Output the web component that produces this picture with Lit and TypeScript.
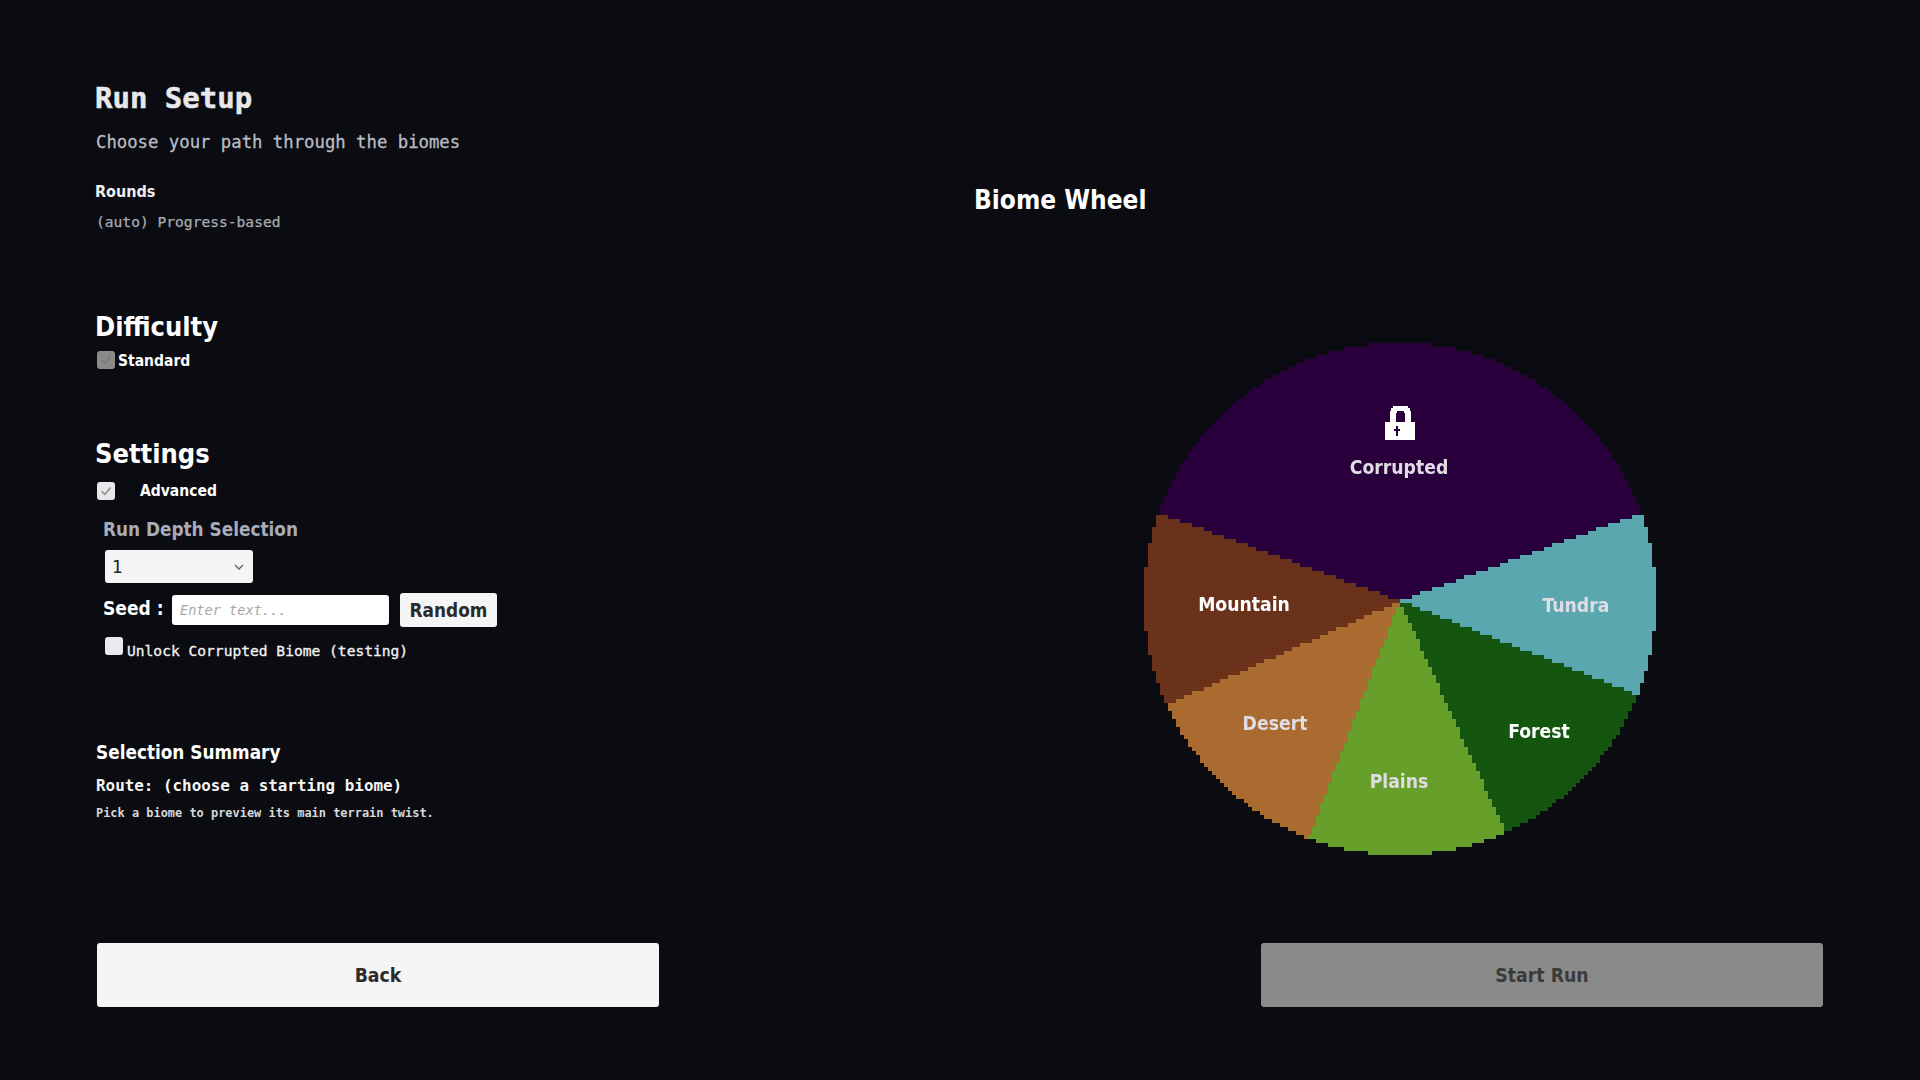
import { LitElement, html, css, svg } from "lit";
import { customElement } from "lit/decorators.js";

const SIZE = 128;
const SLICES = [
  { from: -160, to: -20, color: "#29003c" },
  { from: -20, to: 21.5, color: "#5aa7b0" },
  { from: 21.5, to: 65.5, color: "#14560f" },
  { from: 65.5, to: 111, color: "#66a02b" },
  { from: 111, to: 156, color: "#a96b2f" },
  { from: 156, to: 200, color: "#6b321b" },
];
const LABELS = [
  { text: "Corrupted", x: 255, y: 124, dim: true },
  { text: "Mountain", x: 100, y: 261, dim: false },
  { text: "Tundra", x: 432, y: 262, dim: true },
  { text: "Desert", x: 131, y: 380, dim: true },
  { text: "Forest", x: 395, y: 388, dim: false },
  { text: "Plains", x: 255, y: 438, dim: true },
];

@customElement("app-root")
export class AppRoot extends LitElement {
  static styles = css`
    :host { display: block; width: 1920px; height: 1080px; background: #0a0c12; color: #fff; overflow: hidden; font-family: "DejaVu Sans", sans-serif; font-stretch: condensed; }
    .page { display: flex; flex-direction: column; height: 1080px; }
    .main { display: flex; flex: 1; min-height: 0; }
    .left { width: 879px; padding: 78px 0 0 96px; display: flex; flex-direction: column; align-items: flex-start; }
    .right { flex: 1; padding-top: 180px; }
    .mono { font-family: "DejaVu Sans Mono", monospace; font-stretch: normal; }
    .title { font: 700 29px/40px "DejaVu Sans Mono", monospace; color: #e8e8ea; margin-left: -1px; -webkit-text-stroke: 0.5px #e8e8ea; }
    .subtitle { margin-top: 12px; font-size: 17.3px; line-height: 24px; color: #b9bbc2; -webkit-text-stroke: 0.3px #b9bbc2; }
    .rounds { margin-top: 28px; margin-left: -1px; font-size: 16px; font-weight: 700; line-height: 20px; color: #f0f0f0; }
    .auto { margin-top: 10px; font-size: 14.6px; line-height: 20px; color: #a9abb2; -webkit-text-stroke: 0.25px #a9abb2; }
    .h2 { margin-left: -1px; font-size: 27px; font-weight: 700; line-height: 36px; color: #fff; }
    .difficulty { margin-top: 77px; }
    .settings { margin-top: 66px; }
    .row { display: flex; align-items: center; }
    .std { margin-top: 5px; height: 20px; padding-left: 1px; font-size: 15.5px; font-weight: 700; }
    .std .box { margin-right: 3px; }
    .std span.t { margin-top: 2px; }
    .adv { margin-top: 9px; height: 20px; padding-left: 1px; font-size: 15.5px; font-weight: 700; }
    .adv .box { margin-right: 25px; }
    .box { width: 18px; height: 18px; border-radius: 3px; display: flex; align-items: center; justify-content: center; flex: none; }
    .box svg { width: 14px; height: 14px; }
    .gray { background: #8a8a8a; }
    .light { background: #e8e8ea; }
    .pale { background: #e9eaf0; }
    .depth { margin: 17px 0 0 7px; font-size: 18.8px; font-weight: 700; line-height: 24px; color: #a9abb7; }
    .selwrap { position: relative; margin: 8px 0 0 9px; width: 148px; height: 33px; }
    select { appearance: none; width: 100%; height: 100%; border: 0; border-radius: 3px; background: #f5f5f5; color: #222; font: 400 17px "DejaVu Sans", sans-serif; padding: 0 0 0 7px; }
    .chev { position: absolute; right: 8px; top: 12px; width: 12px; height: 10px; pointer-events: none; }
    .seed { margin: 10px 0 0 7px; height: 34px; }
    .seedlabel { width: 69px; margin-bottom: 4px; font-size: 19px; font-weight: 700; }
    input.text { width: 217px; height: 30px; box-sizing: border-box; border: 0; border-radius: 3px; background: #fff; padding: 0 8px; font: italic 13.6px "DejaVu Sans Mono", monospace; color: #222; outline: none; }
    input.text::placeholder { color: #a8a8a8; opacity: 1; }
    .random { margin-left: 11px; width: 97px; height: 34px; border: 0; border-radius: 3px; background: #f5f5f5; color: #2a2a2a; font: 700 18.8px "DejaVu Sans", sans-serif; font-stretch: condensed; padding: 0; }
    .unlock { margin: 10px 0 0 9px; height: 21px; align-items: flex-start; font-size: 14.6px; line-height: 24px; color: #f2f2f2; -webkit-text-stroke: 0.3px #f2f2f2; }
    .unlock .box { margin-right: 4px; }
    .unlock span.t { margin-top: 2px; }
    .summary { margin-top: 83px; font-size: 18.8px; font-weight: 700; line-height: 24px; }
    .route { margin-top: 11px; font-size: 15.9px; font-weight: 700; line-height: 20px; color: #f5f5f5; }
    .pick { margin-top: 9px; font-size: 11.95px; font-weight: 700; line-height: 16px; color: #d8d8d8; }
    .wheeltitle { margin-left: -1px; font-size: 26px; font-weight: 700; line-height: 40px; }
    .wheel { position: relative; margin: 123px 0 0 169px; width: 512px; height: 512px; }
    canvas { display: block; width: 512px; height: 512px; image-rendering: pixelated; }
    .label { position: absolute; transform: translate(-50%, -50%); font-size: 19.2px; font-weight: 700; white-space: nowrap; color: #fff; }
    .dim { color: #e0dce4; }
    .lock { position: absolute; left: 241px; top: 62px; width: 30px; height: 35px; }
    .foot { display: flex; justify-content: space-between; padding: 0 97px 73px; }
    .btn { width: 562px; height: 64px; border: 0; border-radius: 3px; font: 700 19.3px "DejaVu Sans", sans-serif; font-stretch: condensed; padding: 0; }
    .back { background: #f5f5f5; color: #2b2b2b; }
    .start { background: #8a8a8a; color: #3a3a3a; }
  `;

  firstUpdated() {
    const cv = this.renderRoot.querySelector("canvas") as HTMLCanvasElement;
    const ctx = cv.getContext("2d")!;
    const c = SIZE / 2;
    for (let y = 0; y < SIZE; y++) {
      for (let x = 0; x < SIZE; x++) {
        const dx = x + 0.5 - c;
        const dy = y + 0.5 - c;
        if (dx * dx + dy * dy > c * c) continue;
        // Slices share a tip just below the circle's centre.
        let a = (Math.atan2(dy - 0.5, dx) * 180) / Math.PI;
        if (a < -160) a += 360;
        const s = SLICES.find((k) => a >= k.from && a < k.to);
        if (!s) continue;
        ctx.fillStyle = s.color;
        ctx.fillRect(x, y, 1, 1);
      }
    }
  }

  private check(color: string) {
    return svg`<svg viewBox="0 0 14 14" fill="none" stroke=${color} stroke-width="1.4"><path d="M2.5 7.2 5.8 10.5 11.5 3.5"/></svg>`;
  }

  render() {
    return html`
      <div class="page">
        <div class="main">
          <section class="left">
            <div class="title">Run Setup</div>
            <div class="subtitle mono">Choose your path through the biomes</div>
            <div class="rounds">Rounds</div>
            <div class="auto mono">(auto) Progress-based</div>
            <div class="h2 difficulty">Difficulty</div>
            <div class="row std"><span class="box gray">${this.check("#777")}</span><span class="t">Standard</span></div>
            <div class="h2 settings">Settings</div>
            <div class="row adv"><span class="box light">${this.check("#8a8a8a")}</span>Advanced</div>
            <div class="depth">Run Depth Selection</div>
            <div class="selwrap">
              <select><option>1</option></select>
              <svg class="chev" viewBox="0 0 12 10" fill="none" stroke="#666" stroke-width="1.4"><path d="M2 3 6 7 10 3"/></svg>
            </div>
            <div class="row seed">
              <span class="seedlabel">Seed :</span>
              <input class="text" placeholder="Enter text..." />
              <button class="random">Random</button>
            </div>
            <div class="row unlock mono"><span class="box pale"></span><span class="t">Unlock Corrupted Biome (testing)</span></div>
            <div class="summary">Selection Summary</div>
            <div class="route mono">Route: (choose a starting biome)</div>
            <div class="pick mono">Pick a biome to preview its main terrain twist.</div>
          </section>
          <section class="right">
            <div class="wheeltitle">Biome Wheel</div>
            <div class="wheel">
              <canvas width=${SIZE} height=${SIZE}></canvas>
              <svg class="lock" viewBox="0 0 30 35" shape-rendering="crispEdges" fill="#fff">
                <path fill-rule="evenodd" d="M8 1h15v2h2v3h1v11h4v18H0V17h5V6h1V3h2zM12 6v2h-1v9h9V8h-1V6z"/>
                <path fill="#29003c" d="M11 21h2v3h2v2h-2v5h-2v-5H9v-2h2z"/>
              </svg>
              ${LABELS.map(
                (l) => html`<div class="label ${l.dim ? "dim" : ""}" style="left:${l.x}px;top:${l.y}px">${l.text}</div>`
              )}
            </div>
          </section>
        </div>
        <footer class="foot">
          <button class="btn back">Back</button>
          <button class="btn start">Start Run</button>
        </footer>
      </div>
    `;
  }
}
